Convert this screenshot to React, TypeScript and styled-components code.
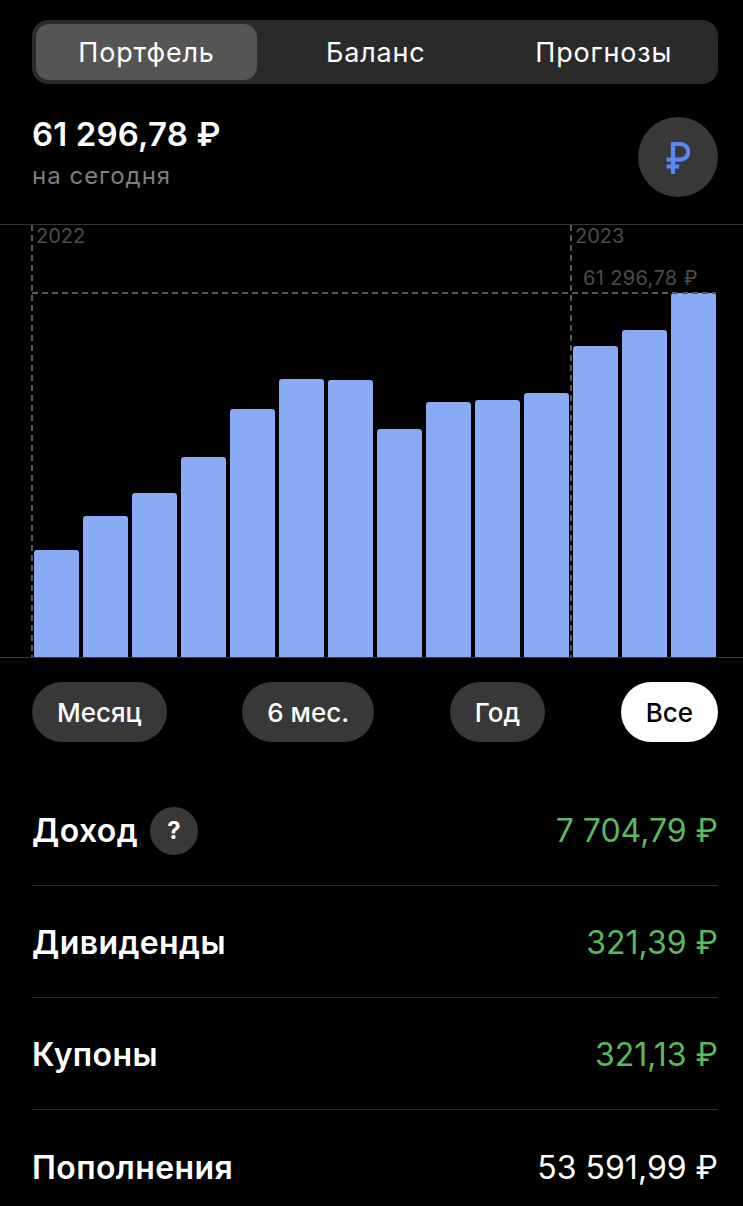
import styled, { createGlobalStyle } from "styled-components";

const GlobalStyle = createGlobalStyle`
    html, body {
        margin: 0;
        padding: 0;
        background: #000;
        height: 1206px;
        overflow: hidden;
    }
    * {
        box-sizing: border-box;
    }
`;

const Page = styled.div`
    width: 743px;
    height: 1206px;
    overflow: hidden;
    background: #000;
    color: #fff;
    font-family: Inter, "Noto Sans", "Liberation Sans", sans-serif;
    padding-top: 20px;
`;

const Tabs = styled.div`
    display: grid;
    grid-template-columns: 221px 1fr 1fr;
    margin: 0 25px 0 32px;
    height: 64px;
    padding: 4px;
    background: #2a2a2a;
    border-radius: 16px;
`;

const Tab = styled.div<{ $active?: boolean; $shift?: number }>`
    display: flex;
    align-items: center;
    justify-content: center;
    font-size: 27px;
    font-weight: 400;
    letter-spacing: 0.8px;
    border-radius: 13px;
    background: ${(p) => (p.$active ? "#555555" : "transparent")};
    padding-left: ${(p) => p.$shift ?? 0}px;
`;

const Header = styled.div`
    display: flex;
    justify-content: space-between;
    align-items: center;
    margin: 33px 25px 27px 32px;
    height: 80px;
`;

const Total = styled.div`
    font-size: 33px;
    line-height: 40px;
    font-weight: 600;
    letter-spacing: 0.15px;
    margin-top: -9px;
`;

const Sub = styled.div`
    font-size: 24px;
    line-height: 32px;
    letter-spacing: 1px;
    color: #7e7e82;
    margin-top: 6px;
`;

const CurrencyButton = styled.div`
    width: 80px;
    height: 80px;
    border-radius: 50%;
    background: #383838;
    display: flex;
    align-items: center;
    justify-content: center;
    padding-top: 2px;
`;

const Chart = styled.div`
    position: relative;
    height: 434px;
    border-top: 1px solid #363636;
    border-bottom: 1px solid #363636;
    padding: 0 27px 0 34px;
    display: flex;
    align-items: flex-end;
    gap: 4px;
`;

const Bar = styled.div`
    width: 45px;
    background: #88abf3;
    border-radius: 3px 3px 0 0;
`;

const YearLine = styled.div<{ $left: number }>`
    position: absolute;
    top: 0;
    bottom: 0;
    left: ${(p) => p.$left}px;
    width: 2px;
    background: repeating-linear-gradient(to bottom, #5a5a5a 0 6px, transparent 6px 10px);
`;

const YearLabel = styled.span`
    position: absolute;
    top: 0;
    left: 5px;
    font-size: 20px;
    line-height: 22px;
    color: #4c4c4c;
`;

const MaxLine = styled.div`
    position: absolute;
    top: 67px;
    left: 32px;
    width: 684px;
    height: 2px;
    background: repeating-linear-gradient(to right, #5a5a5a 0 6px, transparent 6px 10px);
`;

const MaxLabel = styled.span`
    position: absolute;
    top: 41px;
    left: 583px;
    font-size: 20px;
    line-height: 24px;
    letter-spacing: 0.35px;
    color: #4c4c4c;
`;

const Periods = styled.div`
    display: flex;
    justify-content: space-between;
    margin: 24px 25px 0 32px;
`;

const Pill = styled.div<{ $active?: boolean }>`
    height: 60px;
    padding: 0 25px;
    border-radius: 30px;
    display: flex;
    align-items: center;
    font-size: 26px;
    font-weight: 500;
    background: ${(p) => (p.$active ? "#fff" : "#383838")};
    color: ${(p) => (p.$active ? "#000" : "#fff")};
`;

const Rows = styled.div`
    margin: 32px 25px 0 32px;
`;

const Row = styled.div`
    height: 112px;
    padding-top: 2px;
    display: flex;
    align-items: center;
    justify-content: space-between;
    border-bottom: 1px solid #2e2e2e;
    &:last-child {
        border-bottom: none;
    }
`;

const RowLabel = styled.div`
    display: flex;
    align-items: center;
    gap: 12px;
    font-size: 32px;
    font-weight: 600;
    letter-spacing: 0.4px;
`;

const RowValue = styled.div<{ $green?: boolean }>`
    font-size: 32px;
    font-weight: 400;
    color: ${(p) => (p.$green ? "#5cb85f" : "#fff")};
`;

const Help = styled.span`
    width: 48px;
    height: 48px;
    border-radius: 50%;
    background: #383838;
    display: flex;
    align-items: center;
    justify-content: center;
    font-size: 24px;
    font-weight: 700;
`;

const CHART_BOTTOM = 657;
const barTops = [550, 516, 493, 457, 409, 379, 380, 429, 402, 400, 393, 346, 330, 293];

const rows = [
    { label: "Дивиденды", value: "321,39 ₽", green: true },
    { label: "Купоны", value: "321,13 ₽", green: true },
    { label: "Пополнения", value: "53 591,99 ₽", green: false },
];

function RubleIcon() {
    return (
        <svg width="24" height="32" viewBox="0 0 24 32" fill="none" stroke="#5a88f0" strokeWidth="4.2">
            <path d="M7 32V2h7.5a7.7 7.7 0 0 1 0 15.6H0.5" />
            <path d="M0.5 24.5H13" />
        </svg>
    );
}

function App() {
    return (
        <Page>
            <GlobalStyle />
            <Tabs>
                <Tab $active>Портфель</Tab>
                <Tab $shift={9}>Баланс</Tab>
                <Tab $shift={8}>Прогнозы</Tab>
            </Tabs>
            <Header>
                <div>
                    <Total>61 296,78 ₽</Total>
                    <Sub>на сегодня</Sub>
                </div>
                <CurrencyButton>
                    <RubleIcon />
                </CurrencyButton>
            </Header>
            <Chart>
                {barTops.map((top, i) => (
                    <Bar key={i} style={{ height: CHART_BOTTOM - top }} />
                ))}
                <YearLine $left={31}>
                    <YearLabel>2022</YearLabel>
                </YearLine>
                <YearLine $left={570}>
                    <YearLabel>2023</YearLabel>
                </YearLine>
                <MaxLine />
                <MaxLabel>61 296,78 ₽</MaxLabel>
            </Chart>
            <Periods>
                <Pill>Месяц</Pill>
                <Pill>6 мес.</Pill>
                <Pill>Год</Pill>
                <Pill $active>Все</Pill>
            </Periods>
            <Rows>
                <Row>
                    <RowLabel>
                        Доход
                        <Help>?</Help>
                    </RowLabel>
                    <RowValue $green>7 704,79 ₽</RowValue>
                </Row>
                {rows.map((r) => (
                    <Row key={r.label}>
                        <RowLabel>{r.label}</RowLabel>
                        <RowValue $green={r.green}>{r.value}</RowValue>
                    </Row>
                ))}
            </Rows>
        </Page>
    );
}

export default App;
